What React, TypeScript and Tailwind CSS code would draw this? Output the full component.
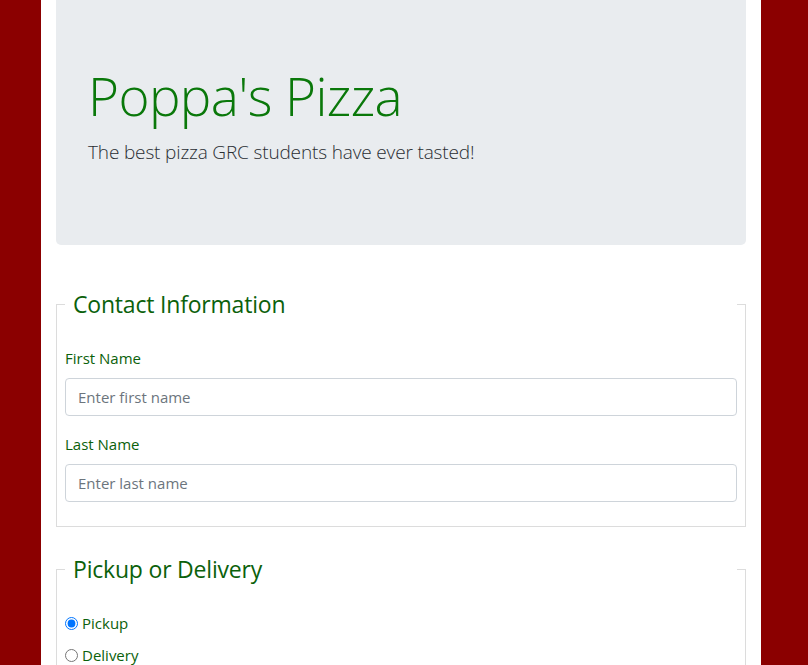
import React from "react";

export default function App() {
  return (
    <div
      className="min-h-[665px] bg-[#8b0000]"
      style={{ fontFamily: '"Open Sans", "Noto Sans", sans-serif' }}
    >
      <div className="ml-[41px] w-[720px] min-h-[665px] bg-white px-[15px] pb-6">
        <div className="mb-[41px] h-[245px] rounded-b-[5px] bg-[#e9ecef] px-8 pt-[62px]">
          <h1 className="mb-2 h-[67px] text-[53px] font-light leading-[67px] tracking-[-0.6px] text-[#0a780a]">
            Poppa's Pizza
          </h1>
          <p className="text-[19px] font-light leading-[30px] tracking-[-0.15px] text-[#2a2e33]">
            The best pizza GRC students have ever tasted!
          </p>
        </div>

        <fieldset className="mb-6 border border-[#dcdcdc] px-2 pt-2 pb-2">
          <legend className="mb-4 w-full px-2 text-[23px] leading-[36px] tracking-[-0.2px] text-[#0b610b]">
            Contact Information
          </legend>
          <div className="mb-4">
            <label className="mb-2 block text-[15px] leading-6 text-[#0b610b]">
              First Name
            </label>
            <input
              type="text"
              placeholder="Enter first name"
              className="block h-[38px] w-full rounded-[4px] border border-[#ced4da] px-3 text-[15px] text-[#495057] placeholder:text-[#6c757d]"
            />
          </div>
          <div className="mb-4">
            <label className="mb-2 block text-[15px] leading-6 text-[#0b610b]">
              Last Name
            </label>
            <input
              type="text"
              placeholder="Enter last name"
              className="block h-[38px] w-full rounded-[4px] border border-[#ced4da] px-3 text-[15px] text-[#495057] placeholder:text-[#6c757d]"
            />
          </div>
        </fieldset>

        <fieldset className="mb-6 border border-[#dcdcdc] px-2 pt-2 pb-2">
          <legend className="mb-4 w-full px-2 text-[23px] leading-[36px] tracking-[-0.2px] text-[#0b610b]">
            Pickup or Delivery
          </legend>
          <label className="mb-2 flex h-6 items-center text-[15px] leading-6 text-[#0b610b]">
            <input type="radio" name="method" defaultChecked className="mr-1 h-[13px] w-[13px]" />
            Pickup
          </label>
          <label className="mb-2 flex h-6 items-center text-[15px] leading-6 text-[#0b610b]">
            <input type="radio" name="method" className="mr-1 h-[13px] w-[13px]" />
            Delivery
          </label>
        </fieldset>
      </div>
    </div>
  );
}
